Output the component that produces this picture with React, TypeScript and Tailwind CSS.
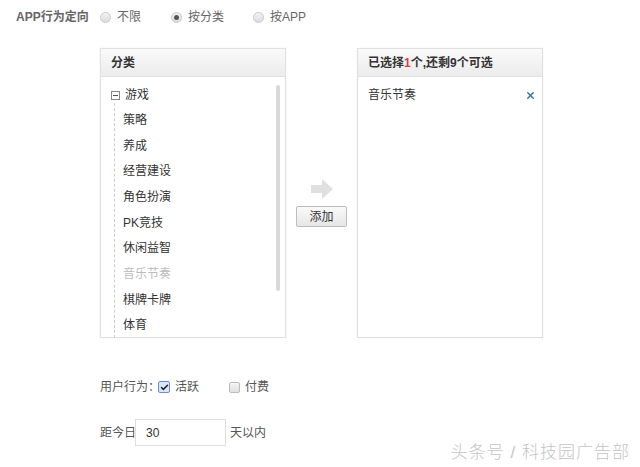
import { X, Check } from "lucide-react";

const font = {
  fontFamily: '"Liberation Sans", "Noto Sans CJK SC", sans-serif',
};

const children = [
  { name: "策略" },
  { name: "养成" },
  { name: "经营建设" },
  { name: "角色扮演" },
  { name: "PK竞技" },
  { name: "休闲益智" },
  { name: "音乐节奏", disabled: true },
  { name: "棋牌卡牌" },
  { name: "体育" },
];

function Radio({ checked, label }: { checked?: boolean; label: string }) {
  return (
    <label className="flex items-center gap-[6px] whitespace-nowrap">
      <span className="flex h-[11px] w-[11px] items-center justify-center rounded-full border border-[#c8c8c8] bg-gradient-to-b from-[#f4f4f4] to-[#dcdcdc]">
        {checked && <span className="h-[5px] w-[5px] rounded-full bg-[#555]" />}
      </span>
      <span>{label}</span>
    </label>
  );
}

function PanelHeader({ children }: { children: React.ReactNode }) {
  return (
    <div className="flex h-[28px] items-center whitespace-nowrap border-b border-[#e2e2e2] bg-gradient-to-b from-[#fafafa] to-[#ececec] px-[10px] text-[12px] font-bold text-[#333]">
      {children}
    </div>
  );
}

export default function App() {
  return (
    <div className="relative h-[467px] w-[640px] bg-white text-[12px] text-[#333]" style={font}>
      <div className="flex h-[34px] items-center pl-[16px] text-[#666]">
        <span className="w-[84px] shrink-0 whitespace-nowrap font-bold">APP行为定向</span>
        <div className="flex items-center">
          <div className="w-[71px]">
            <Radio label="不限" />
          </div>
          <div className="w-[82px]">
            <Radio checked label="按分类" />
          </div>
          <Radio label="按APP" />
        </div>
      </div>

      <div className="ml-[100px] mt-[14px] flex">
        <div className="h-[290px] w-[186px] border border-[#e0e0e0] shadow-[0_0_2px_rgba(0,0,0,0.06)]">
          <PanelHeader>分类</PanelHeader>
          <div className="flex">
            <div className="relative flex-1 pl-[10px] pt-[10px]">
              <div className="flex h-[16px] items-center gap-[5px]">
                <span className="flex h-[9px] w-[9px] items-center justify-center border border-[#888]">
                  <span className="h-[1px] w-[5px] bg-[#555]" />
                </span>
                <span>游戏</span>
              </div>
              <div className="ml-[3px] border-l border-dashed border-[#ccc] pl-[8px] pt-[4px]">
                {children.map((c) => (
                  <div
                    key={c.name}
                    className={`flex h-[25.7px] items-center ${c.disabled ? "text-[#bbb]" : "text-[#333]"}`}
                  >
                    {c.name}
                  </div>
                ))}
              </div>
            </div>
            <div className="mr-[5px] mt-[8px] h-[206px] w-[4px] rounded-[2px] bg-[#d9d9d9]" />
          </div>
        </div>

        <div className="flex w-[71px] flex-col items-center pt-[131px]">
          <svg width="22" height="20" viewBox="0 0 22 20">
            <polygon points="0,6 11,6 11,0 22,10 11,20 11,14 0,14" fill="#e0e0e0" />
          </svg>
          <button className="mt-[7px] h-[21px] w-[51px] rounded-[2px] border border-[#bdbdbd] bg-gradient-to-b from-[#fafafa] to-[#e6e6e6] text-[12px] text-[#333]">
            添加
          </button>
        </div>

        <div className="h-[290px] w-[186px] border border-[#e0e0e0] shadow-[0_0_2px_rgba(0,0,0,0.06)]">
          <PanelHeader>
            已选择<span className="text-[#e4393c]">1</span>个,还剩9个可选
          </PanelHeader>
          <div className="flex h-[36px] items-center justify-between pl-[10px] pr-[6px]">
            <span>音乐节奏</span>
            <X className="h-[11px] w-[11px] text-[#2b6ea8]" strokeWidth={3} />
          </div>
        </div>
      </div>

      <div className="ml-[100px] mt-[40px] flex h-[18px] items-center whitespace-nowrap text-[#555]">
        <span className="mr-[-2px] w-[60px] shrink-0">用户行为：</span>
        <span className="flex h-[12px] w-[12px] shrink-0 items-center justify-center rounded-[2px] border border-[#6a8fd0] bg-[#dbe6f8]">
          <Check className="h-[9px] w-[9px] text-[#222]" strokeWidth={4} />
        </span>
        <span className="ml-[5px] w-[54px] shrink-0">活跃</span>
        <span className="h-[11px] w-[11px] shrink-0 rounded-[2px] border border-[#bbb] bg-gradient-to-b from-[#f4f4f4] to-[#e0e0e0]" />
        <span className="ml-[5px]">付费</span>
      </div>

      <div className="ml-[100px] mt-[23px] flex items-center whitespace-nowrap text-[#555]">
        <span className="w-[35px] shrink-0">距今日</span>
        <div className="flex h-[27px] w-[91px] shrink-0 items-center border border-[#ddd] pl-[10px] text-[#333]">30</div>
        <span className="ml-[4px]">天以内</span>
      </div>

      <div className="absolute bottom-[2px] right-[10px] whitespace-nowrap text-[17px] font-light tracking-[1px] text-[#c4c4c4]">
        头条号 / 科技园广告部
      </div>
    </div>
  );
}
